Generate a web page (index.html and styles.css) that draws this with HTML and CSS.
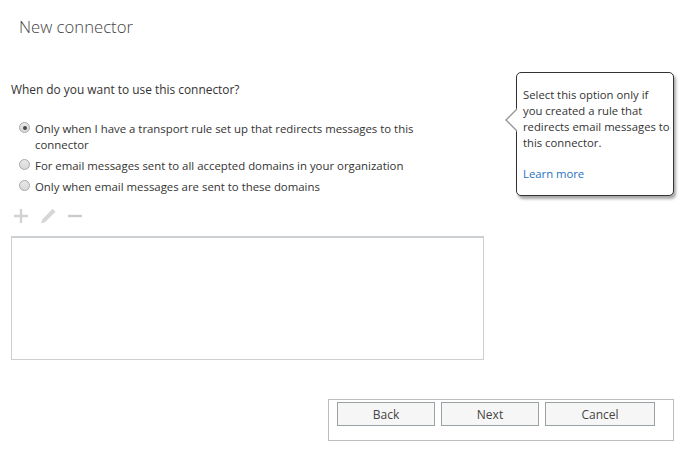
FILE: index.html
```html
<!DOCTYPE html>
<html>
<head>
<meta charset="utf-8">
<link rel="stylesheet" href="styles.css">
</head>
<body>
<div class="page">
  <h1 class="title">New connector</h1>
  <div class="content">
    <p class="question">When do you want to use this connector?</p>
    <div class="options">
      <label class="opt"><span class="radio checked"></span><span class="opt-text">Only when I have a transport rule set up that redirects messages to this connector</span></label>
      <label class="opt"><span class="radio"></span><span class="opt-text">For email messages sent to all accepted domains in your organization</span></label>
      <label class="opt"><span class="radio"></span><span class="opt-text">Only when email messages are sent to these domains</span></label>
    </div>
    <div class="toolbar">
      <svg class="tool" width="16" height="16" viewBox="0 0 16 16"><path d="M8 1v14M1 8h14" stroke="#d2d2d2" stroke-width="2.4" fill="none"/></svg>
      <svg class="tool" width="18" height="16" viewBox="0 0 18 16"><path d="M13.5 0.8l3 3L6 14.3l-3.6 0.9 0.9-3.6z" fill="#d6d6d6"/><path d="M2.4 15.2l0.5-2" stroke="#e4e4e4" stroke-width="1"/></svg>
      <svg class="tool" width="16" height="16" viewBox="0 0 16 16"><path d="M1 8h14" stroke="#c9cdcd" stroke-width="2.4" fill="none"/></svg>
    </div>
    <div class="listbox"></div>
  </div>
  <div class="callout">
    <p>Select this option only if<br>you created a rule that<br>redirects email messages to<br>this connector.</p>
    <a class="learn" href="#">Learn more</a>
  </div>
  <div class="footer">
    <div class="btn-panel">
      <button class="btn btn-back">Back</button>
      <button class="btn btn-next">Next</button>
      <button class="btn btn-cancel">Cancel</button>
    </div>
  </div>
</div>
</body>
</html>
```
FILE: styles.css
```css
html, body {
  margin: 0;
  padding: 0;
  background: #fff;
}
body {
  font-family: "Open Sans", "Segoe UI", sans-serif;
  color: #333;
  width: 683px;
  height: 461px;
  overflow: hidden;
}
.page {
  position: relative;
  padding: 0 0 0 11px;
  height: 461px;
  box-sizing: border-box;
}
.title {
  margin: 0;
  padding: 15px 0 0 8px;
  font-weight: 300;
  font-size: 16.7px;
  line-height: 24px;
  color: #444;
}
.content {
  width: 473px;
  padding-top: 42px;
}
.question {
  margin: 0;
  font-size: 11.9px;
  line-height: 16px;
  color: #333;
}
.options {
  margin-top: 24px;
  padding-left: 8px;
  display: flex;
  flex-direction: column;
  gap: 5px;
}
.opt {
  display: flex;
  align-items: flex-start;
  font-size: 11.4px;
  line-height: 16px;
  color: #333;
}
.radio {
  flex: none;
  width: 11px;
  height: 11px;
  border-radius: 50%;
  border: 1px solid #a8a8a8;
  background: linear-gradient(#e8e8e8, #d8d8d8);
  margin: 1px 5px 0 0;
  box-sizing: border-box;
  position: relative;
}
.radio.checked::after {
  content: "";
  position: absolute;
  left: 2.5px;
  top: 2.5px;
  width: 4px;
  height: 4px;
  border-radius: 50%;
  background: #4a4a4a;
}
.opt-text {
  width: 400px;
}
.toolbar {
  display: flex;
  align-items: center;
  gap: 10px;
  margin-top: 13px;
  padding-left: 2px;
  height: 16px;
}
.listbox {
  margin-top: 12px;
  height: 121px;
  border: 1px solid #ccd0d2;
  border-top-width: 2px;
}
.callout {
  position: absolute;
  left: 516px;
  top: 72px;
  width: 158px;
  height: 124px;
  box-sizing: border-box;
  border: 1px solid #333;
  border-radius: 5px;
  background: #fff;
  box-shadow: 2px 3px 3px rgba(0,0,0,0.35);
  padding: 14px 2px 0 6px;
  font-size: 11.3px;
  line-height: 16px;
  white-space: nowrap;
}
.callout::before {
  content: "";
  position: absolute;
  left: -12px;
  top: 35px;
  width: 0;
  height: 0;
  border-top: 12px solid transparent;
  border-bottom: 12px solid transparent;
  border-right: 12px solid #999;
}
.callout::after {
  content: "";
  position: absolute;
  left: -10px;
  top: 36px;
  width: 0;
  height: 0;
  border-top: 11px solid transparent;
  border-bottom: 11px solid transparent;
  border-right: 11px solid #fff;
}
.callout p {
  margin: 0;
}
.learn {
  display: block;
  margin-top: 15px;
  color: #1f6fc5;
  text-decoration: none;
}
.footer {
  position: absolute;
  left: 0;
  right: 9px;
  top: 399px;
  display: flex;
  justify-content: flex-end;
}
.btn-panel {
  width: 346px;
  height: 42px;
  box-sizing: border-box;
  border: 1px solid #bdbdbd;
  padding: 2px 0 0 8px;
  display: flex;
  gap: 6px;
  align-items: flex-start;
}
.btn {
  height: 24px;
  border: 1px solid #9aa2a5;
  background: #f6f6f6;
  font-family: "Open Sans", sans-serif;
  font-size: 12px;
  color: #444;
  padding: 0;
  margin: 0;
}
.btn-back, .btn-next { width: 98px; }
.btn-cancel { width: 110px; }
```
